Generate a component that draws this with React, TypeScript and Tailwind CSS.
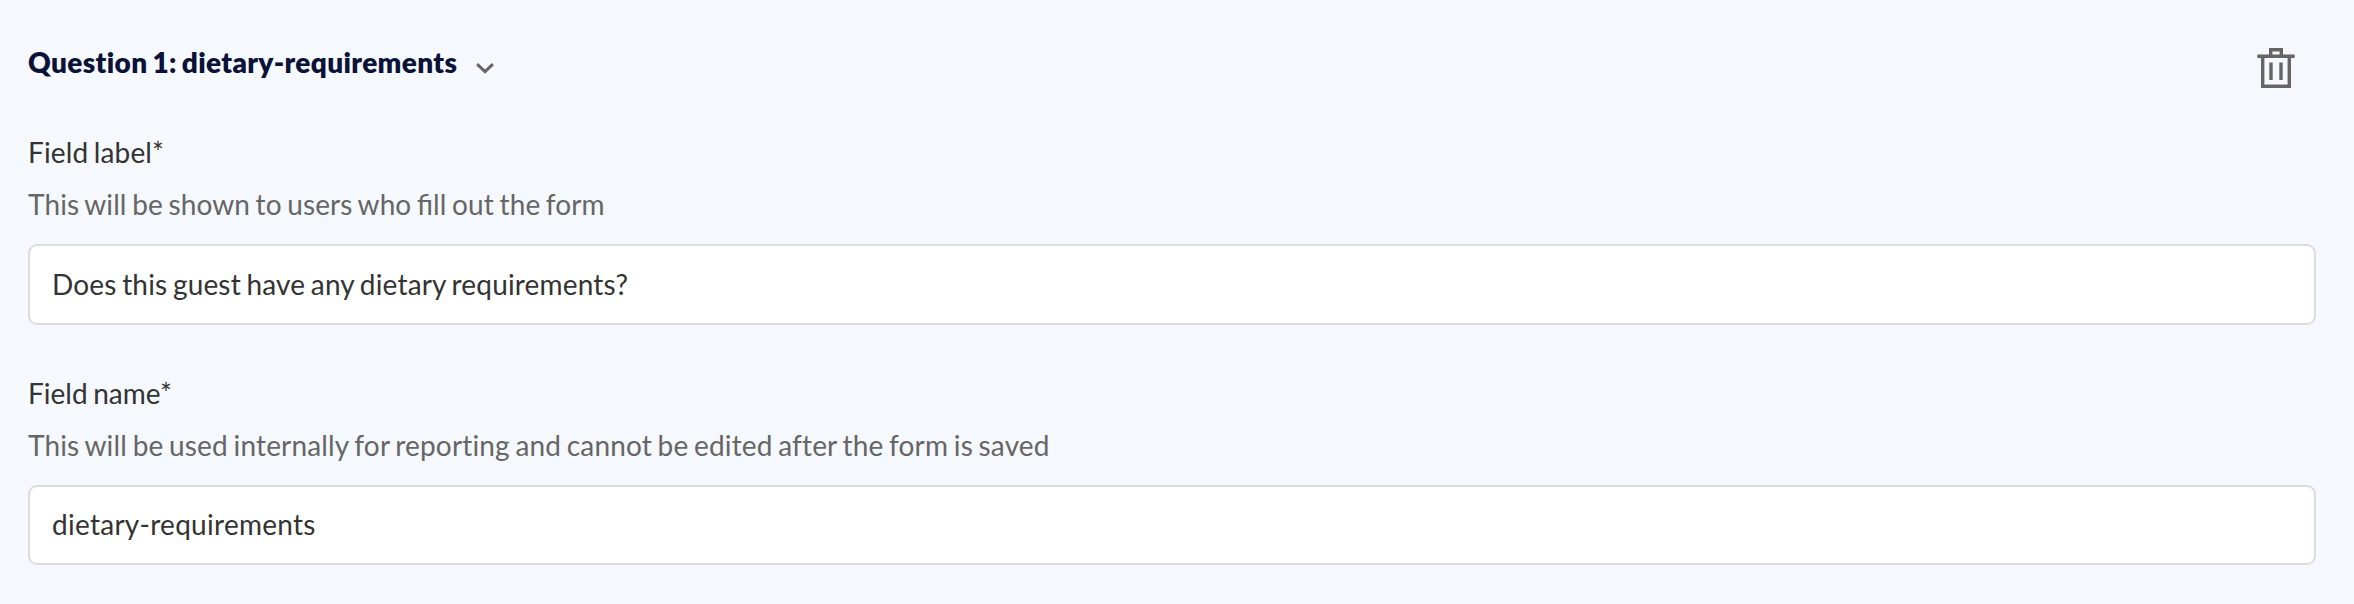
const fields = [
  {
    id: "field-label",
    label: "Field label*",
    labelClass: "tracking-[0.13px]",
    hint: "This will be shown to users who fill out the form",
    hintClass: "tracking-[0.11px] [font-feature-settings:'liga'_1]",
    value: "Does this guest have any dietary requirements?",
    inputClass: "h-[81px] tracking-[0.16px]",
  },
  {
    id: "field-name",
    label: "Field name*",
    labelClass: "tracking-[0.02px]",
    hint: "This will be used internally for reporting and cannot be edited after the form is saved",
    hintClass: "tracking-[0.16px]",
    value: "dietary-requirements",
    inputClass: "h-20 tracking-[0.27px]",
  },
];

export default function App() {
  return (
    <div className="h-[604px] bg-[#f5f8fd] pt-[37px] pr-[38px] pl-7 font-['Lato',sans-serif] text-[28px] [word-spacing:-1.7px] text-[#333]">
      <div className="flex h-[77px] items-start justify-between pr-[21px]">
        <button className="flex items-center gap-[19px] leading-[50px] font-extrabold tracking-[0.35px] [word-spacing:-1.8px] text-[#0a1237]">
          Question 1: dietary-requirements
          <svg className="mt-[13px] h-[11px] w-[18px]" viewBox="0 0 18 11" fill="none" stroke="#666" strokeWidth="3">
            <path d="M1.1 1.1L9 8.6l7.9-7.5" />
          </svg>
        </button>
        <button aria-label="Delete question" className="mt-[11px]">
          <svg className="block h-10 w-[38px]" viewBox="0 0 38 40" fill="none" stroke="#666" strokeWidth="3.4">
            <path d="M.3 8.3h37.4M13.7 8.3V1.7h10.6v6.6M5.7 8.3v30h26.6v-30M14 14.6v17.4M24 14.6v17.4" />
          </svg>
        </button>
      </div>
      {fields.map((field) => (
        <div key={field.id} className="h-[241px] pt-3">
          <label htmlFor={field.id} className={`block leading-[52px] ${field.labelClass}`}>
            {field.label}
          </label>
          <p className={`leading-[52px] text-[#666] ${field.hintClass}`}>{field.hint}</p>
          <input
            id={field.id}
            defaultValue={field.value}
            className={`mt-3.5 block w-full rounded-[9px] border-2 border-[#dcdcdc] bg-white px-[22px] pb-0.5 [word-spacing:-1.7px] ${field.inputClass}`}
          />
        </div>
      ))}
    </div>
  );
}
